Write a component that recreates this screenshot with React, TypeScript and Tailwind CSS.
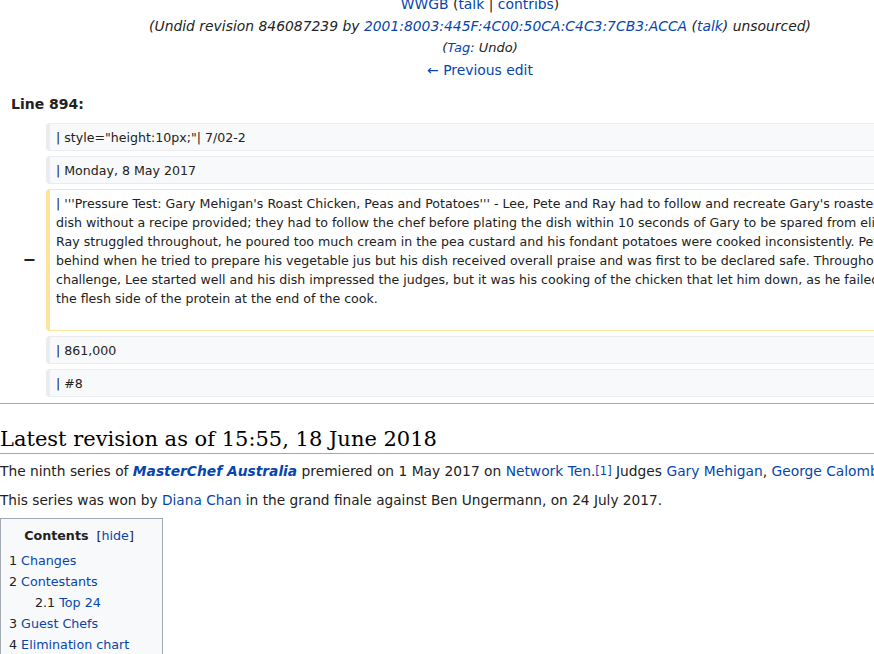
import React from "react";

const sans = { fontFamily: '"DejaVu Sans", sans-serif' };
const serif = { fontFamily: '"DejaVu Serif", serif' };

const L = ({ children, className = "" }: { children: React.ReactNode; className?: string }) => (
  <span className={"text-[#0645ad] " + className}>{children}</span>
);

function CtxRow({ text }: { text: string }) {
  return (
    <div className="flex">
      <div className="w-[46px] shrink-0" />
      <div className="w-[912px] shrink-0 bg-[#f8f9fa] border border-[#eaecf0] border-l-4 rounded-[4px] pt-[4px] pb-[3px] pl-[6px] text-[12.6px] leading-[19px] text-[#222] whitespace-nowrap overflow-hidden">
        {text}
      </div>
    </div>
  );
}

const delLines = [
  "| '''Pressure Test: Gary Mehigan's Roast Chicken, Peas and Potatoes''' - Lee, Pete and Ray had to follow and recreate Gary's roasted chicken",
  "dish without a recipe provided; they had to follow the chef before plating the dish within 10 seconds of Gary to be spared from elimination.",
  "Ray struggled throughout, he poured too much cream in the pea custard and his fondant potatoes were cooked inconsistently. Pete fell",
  "behind when he tried to prepare his vegetable jus but his dish received overall praise and was first to be declared safe. Throughout the",
  "challenge, Lee started well and his dish impressed the judges, but it was his cooking of the chicken that let him down, as he failed to",
  "the flesh side of the protein at the end of the cook.",
  "\u00a0",
];

export default function App() {
  return (
    <div className="w-[874px] h-[654px] overflow-hidden bg-white text-[#222]" style={sans}>
      <div className="w-[960px]">
        {/* titles */}
        <div className="-mt-[7px] text-center text-[13.9px] leading-[22px]">
          <div>
            <L>WWGB</L> (<L>talk</L> | <L>contribs</L>)
          </div>
          <div className="italic">
            (Undid revision 846087239 by <L>2001:8003:445F:4C00:50CA:C4C3:7CB3:ACCA</L> (<L>talk</L>) unsourced)
          </div>
          <div className="italic text-[13px]">
            (<L>Tag</L>: Undo)
          </div>
          <div>
            <L>← Previous edit</L>
          </div>
        </div>

        {/* line number */}
        <div className="mt-[12px] pl-[11px] text-[14px] leading-[22px] font-bold">Line 894:</div>

        {/* diff rows */}
        <div className="mt-[8px] flex flex-col gap-[5px]">
          <CtxRow text={'| style="height:10px;"| 7/02-2'} />
          <CtxRow text="| Monday, 8 May 2017" />
          <div className="flex">
            <div className="w-[46px] shrink-0 flex items-center justify-end pr-[10px] text-[16px] font-bold">−</div>
            <div className="w-[912px] shrink-0 bg-white border border-[#ffe49c] border-l-4 rounded-[4px] pt-[4px] pb-[3px] pl-[6px] text-[12.6px] leading-[19px] text-[#222] whitespace-nowrap overflow-hidden">
              {delLines.map((l, i) => (
                <div key={i}>{l}</div>
              ))}
            </div>
          </div>
          <CtxRow text="| 861,000" />
          <CtxRow text="| #8" />
        </div>
      </div>

      <div className="mt-[6px] border-t border-[#a2a9b1]" />

      <h2 className="mt-[21px] pt-[1px] border-b border-[#a2a9b1] text-[21px] leading-[27px] text-black whitespace-nowrap" style={serif}>
        Latest revision as of 15:55, 18 June 2018
      </h2>

      <p className="mt-[6px] text-[13.8px] leading-[22px] whitespace-nowrap">
        The ninth series of <L className="font-bold italic">MasterChef Australia</L> premiered on 1 May 2017 on{" "}
        <L>Network Ten</L>.<sup className="text-[11.5px] text-[#0645ad] relative -top-[1px]">[1]</sup> Judges{" "}
        <L>Gary Mehigan</L>, <L>George Calombaris</L> and <L>Matt Preston</L> returned.
      </p>
      <p className="mt-[7px] text-[13.7px] leading-[22px] whitespace-nowrap">
        This series was won by <L>Diana Chan</L> in the grand finale against Ben Ungermann, on 24 July 2017.
      </p>

      {/* TOC */}
      <div className="mt-[7px] w-[163px] border border-[#a2a9b1] bg-[#f8f9fa] pt-[7px] pb-[7px] pl-[8px] text-[12.7px]">
        <div className="text-center leading-[20px] pr-[13px]">
          <span className="font-bold">Contents</span>
          <span className="ml-[8px]">
            [<L>hide</L>]
          </span>
        </div>
        <div className="mt-[4px] leading-[21px]">
          <div>
            1 <L>Changes</L>
          </div>
          <div>
            2 <L>Contestants</L>
          </div>
          <div className="pl-[26px]">
            2.1 <L>Top 24</L>
          </div>
          <div>
            3 <L>Guest Chefs</L>
          </div>
          <div>
            4 <L>Elimination chart</L>
          </div>
          <div>
            5 <L>Episodes</L>
          </div>
        </div>
      </div>
    </div>
  );
}
